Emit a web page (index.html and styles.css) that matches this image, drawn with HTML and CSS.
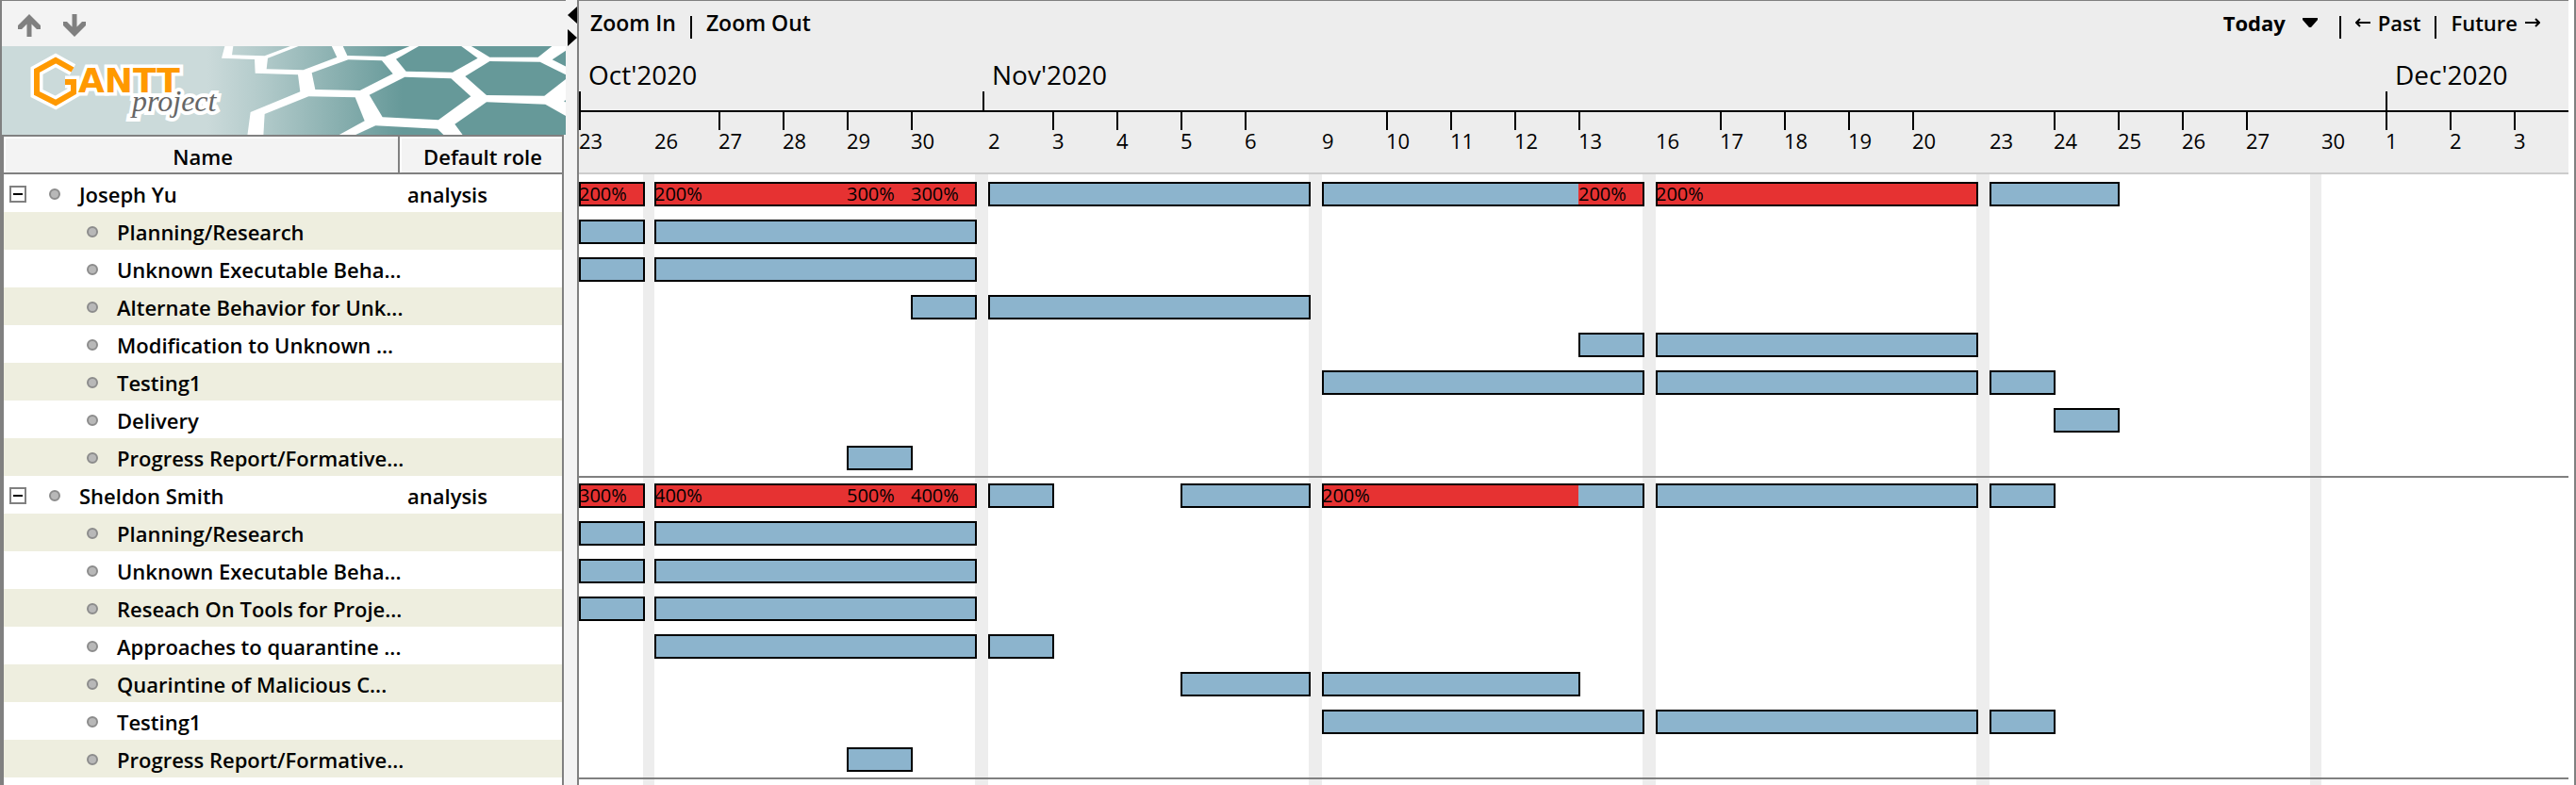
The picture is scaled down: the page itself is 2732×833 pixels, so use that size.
FILE: index.html
```html
<!DOCTYPE html>
<html lang="en">
<head>
<meta charset="utf-8">
<title>GanttProject - Resources Chart</title>
<link rel="stylesheet" href="styles.css">
</head>
<body>
<div class="app">
  <aside class="panel">
    <div class="panel-tools">
      <button type="button" class="tool" aria-label="Move up">
        <svg width="26" height="26" viewBox="0 0 26 26"><path d="M13 1 L25 13 V17 L21 17 L15.500 11.500 V25 H10.500 V11.500 L5 17 L1 17 V13 Z" fill="#808080"/></svg>
      </button>
      <button type="button" class="tool" aria-label="Move down">
        <svg width="26" height="26" viewBox="0 0 26 26"><path d="M13 25 L25 13 V9 L21 9 L15.500 14.500 V1 H10.500 V14.500 L5 9 L1 9 V13 Z" fill="#808080"/></svg>
      </button>
    </div>
    <svg class="banner" viewBox="0 0 598 94" preserveAspectRatio="xMinYMin slice" role="img" aria-label="GanttProject">
      <defs>
        <linearGradient id="sea" gradientUnits="userSpaceOnUse" x1="-60" y1="0" x2="560" y2="0">
          <stop offset="0" stop-color="#cbdada"/>
          <stop offset="0.25" stop-color="#b5cccc"/>
          <stop offset="1" stop-color="#669999"/>
        </linearGradient>
      </defs>
      <g transform="translate(238 -9) scale(0.33333)">
        <rect x="-720" y="20" width="1820" height="300" fill="url(#sea)"/>
        <path fill="#fff" d="M-3 20 L-15 65 L90 69 L92 113 L228 118 L235 172 L77 237 L67 312 H1090 V20 Z"/>
        <g fill="url(#sea)">
          <path d="M23 20 L18 55 L122 58 L222 20 Z"/>
          <path d="M132 65 L248 20 H332 L352 62 L245 103 L128 100 Z"/>
          <path d="M272 112 L388 70 L495 73 L530 115 L425 168 L283 165 Z"/>
          <path d="M368 20 H600 L505 60 L385 57 Z"/>
          <path d="M540 68 L625 20 H738 L800 65 L720 110 L572 107 Z"/>
          <path d="M455 182 L568 125 L715 130 L778 187 L675 262 L497 253 Z"/>
          <path d="M768 20 H1045 L992 62 L838 62 Z"/>
          <path d="M760 123 L838 75 L998 77 L1085 120 V128 L1012 185 L828 183 Z"/>
          <path d="M1037 70 L1085 38 V94 Z"/>
          <path d="M727 275 L828 205 L1015 212 L1085 252 V312 H754 Z"/>
          <path d="M122 243 L262 187 L410 190 L440 265 L354 312 H118 Z"/>
          <path d="M405 312 L475 280 L672 290 L694 312 Z"/>
          <path d="M1074 202 L1085 196 V208 Z"/>
        </g>
      </g>
      <g fill="none" stroke-linejoin="miter">
        <path d="M75 25 L57 15 L37 26 V50 L57 60 L76 49 V38 H67" stroke="#fff" stroke-width="13"/>
        <text class="logo-name" x="81" y="49">ANTT</text>
        <path d="M75 25 L57 15 L37 26 V50 L57 60 L76 49 V38 H67" stroke="#ff9900" stroke-width="6"/>
        <text class="logo-sub" x="138" y="69">project</text>
      </g>
    </svg>
    <table class="people">
      <colgroup><col class="col-name"><col class="col-role"></colgroup>
      <thead><tr><th scope="col">Name</th><th scope="col">Default role</th></tr></thead>
      <tbody>
        <tr><td><div class="person"><button type="button" class="fold" aria-label="Collapse Joseph Yu"></button><i class="dot"></i>Joseph Yu</div></td><td>analysis</td></tr>
        <tr><td><div class="task"><i class="dot"></i>Planning/Research</div></td><td></td></tr>
        <tr><td><div class="task"><i class="dot"></i>Unknown Executable Beha...</div></td><td></td></tr>
        <tr><td><div class="task"><i class="dot"></i>Alternate Behavior for Unk...</div></td><td></td></tr>
        <tr><td><div class="task"><i class="dot"></i>Modification to Unknown ...</div></td><td></td></tr>
        <tr><td><div class="task"><i class="dot"></i>Testing1</div></td><td></td></tr>
        <tr><td><div class="task"><i class="dot"></i>Delivery</div></td><td></td></tr>
        <tr><td><div class="task"><i class="dot"></i>Progress Report/Formative...</div></td><td></td></tr>
        <tr><td><div class="person"><button type="button" class="fold" aria-label="Collapse Sheldon Smith"></button><i class="dot"></i>Sheldon Smith</div></td><td>analysis</td></tr>
        <tr><td><div class="task"><i class="dot"></i>Planning/Research</div></td><td></td></tr>
        <tr><td><div class="task"><i class="dot"></i>Unknown Executable Beha...</div></td><td></td></tr>
        <tr><td><div class="task"><i class="dot"></i>Reseach On Tools for Proje...</div></td><td></td></tr>
        <tr><td><div class="task"><i class="dot"></i>Approaches to quarantine ...</div></td><td></td></tr>
        <tr><td><div class="task"><i class="dot"></i>Quarintine of Malicious C...</div></td><td></td></tr>
        <tr><td><div class="task"><i class="dot"></i>Testing1</div></td><td></td></tr>
        <tr><td><div class="task"><i class="dot"></i>Progress Report/Formative...</div></td><td></td></tr>
      </tbody>
    </table>
    <div class="panel-rest"></div>
  </aside>

  <div class="splitter">
    <button type="button" aria-label="Hide table"><svg width="10" height="18" viewBox="0 0 10 18"><path d="M10 0 V18 L0 9 Z"/></svg></button>
    <button type="button" aria-label="Hide chart"><svg width="10" height="18" viewBox="0 0 10 18"><path d="M0 0 V18 L10 9 Z"/></svg></button>
  </div>

  <main class="chart">
    <header class="chart-head">
      <nav class="chart-tools">
        <button type="button">Zoom In</button><i class="bar-sep"></i><button type="button">Zoom Out</button>
        <span class="spring"></span>
        <button type="button" class="today">Today <svg width="16" height="10" viewBox="0 0 16 10"><path d="M0 0 H16 V2 L9 10 H7 L0 2 Z"/></svg></button><i class="bar-sep"></i><button type="button" class="step"><svg width="16" height="10" viewBox="0 0 16 10"><path d="M16 5 H2 M5 1 L1 5 L5 9" fill="none" stroke="#000" stroke-width="2"/></svg>Past</button><i class="bar-sep"></i><button type="button" class="step">Future<svg width="16" height="10" viewBox="0 0 16 10"><path d="M0 5 H14 M11 1 L15 5 L11 9" fill="none" stroke="#000" stroke-width="2"/></svg></button>
      </nav>
      <div class="calendar months">
        <div class="month" style="grid-column:1/8">Oct'2020</div>
        <div class="month midgap" style="grid-column:8/34">Nov'2020</div>
        <div class="month" style="grid-column:34/37">Dec'2020</div>
      </div>
      <div class="calendar days">
        <span class="day tick" style="grid-column:1">23</span>
        <span class="day" style="grid-column:3">26</span>
        <span class="day tick" style="grid-column:4">27</span>
        <span class="day tick" style="grid-column:5">28</span>
        <span class="day tick" style="grid-column:6">29</span>
        <span class="day tick" style="grid-column:7">30</span>
        <span class="day" style="grid-column:9">2</span>
        <span class="day tick" style="grid-column:10">3</span>
        <span class="day tick" style="grid-column:11">4</span>
        <span class="day tick" style="grid-column:12">5</span>
        <span class="day tick" style="grid-column:13">6</span>
        <span class="day" style="grid-column:15">9</span>
        <span class="day tick" style="grid-column:16">10</span>
        <span class="day tick" style="grid-column:17">11</span>
        <span class="day tick" style="grid-column:18">12</span>
        <span class="day tick" style="grid-column:19">13</span>
        <span class="day" style="grid-column:21">16</span>
        <span class="day tick" style="grid-column:22">17</span>
        <span class="day tick" style="grid-column:23">18</span>
        <span class="day tick" style="grid-column:24">19</span>
        <span class="day tick" style="grid-column:25">20</span>
        <span class="day" style="grid-column:27">23</span>
        <span class="day tick" style="grid-column:28">24</span>
        <span class="day tick" style="grid-column:29">25</span>
        <span class="day tick" style="grid-column:30">26</span>
        <span class="day tick" style="grid-column:31">27</span>
        <span class="day" style="grid-column:33">30</span>
        <span class="day tick" style="grid-column:34">1</span>
        <span class="day tick" style="grid-column:35">2</span>
        <span class="day tick" style="grid-column:36">3</span>
      </div>
    </header>

    <div class="chart-body">
      <div class="calendar weekends">
        <i style="grid-column:2"></i><i style="grid-column:8"></i><i style="grid-column:14"></i><i style="grid-column:20"></i><i style="grid-column:26"></i><i style="grid-column:32"></i>
      </div>
      <div class="lanes">
        <div class="calendar lane">
          <b class="bar over" style="grid-column:1/2"></b><span class="load" style="grid-column:1">200%</span>
          <b class="bar over" style="grid-column:3/8"></b><span class="load" style="grid-column:3">200%</span><span class="load" style="grid-column:6">300%</span><span class="load" style="grid-column:7">300%</span>
          <b class="bar" style="grid-column:9/14"></b>
          <b class="bar" style="grid-column:15/20"></b><b class="fill" style="grid-column:19/20"></b><span class="load" style="grid-column:19">200%</span>
          <b class="bar over" style="grid-column:21/26"></b><span class="load" style="grid-column:21">200%</span>
          <b class="bar" style="grid-column:27/29"></b>
        </div>
        <div class="calendar lane"><b class="bar" style="grid-column:1/2"></b><b class="bar" style="grid-column:3/8"></b></div>
        <div class="calendar lane"><b class="bar" style="grid-column:1/2"></b><b class="bar" style="grid-column:3/8"></b></div>
        <div class="calendar lane"><b class="bar" style="grid-column:7/8"></b><b class="bar" style="grid-column:9/14"></b></div>
        <div class="calendar lane"><b class="bar" style="grid-column:19/20"></b><b class="bar" style="grid-column:21/26"></b></div>
        <div class="calendar lane"><b class="bar" style="grid-column:15/20"></b><b class="bar" style="grid-column:21/26"></b><b class="bar" style="grid-column:27/28"></b></div>
        <div class="calendar lane"><b class="bar" style="grid-column:28/29"></b></div>
        <div class="calendar lane"><b class="bar" style="grid-column:6/7"></b></div>
        <div class="calendar lane first">
          <b class="bar over" style="grid-column:1/2"></b><span class="load" style="grid-column:1">300%</span>
          <b class="bar over" style="grid-column:3/8"></b><span class="load" style="grid-column:3">400%</span><span class="load" style="grid-column:6">500%</span><span class="load" style="grid-column:7">400%</span>
          <b class="bar" style="grid-column:9/10"></b>
          <b class="bar" style="grid-column:12/14"></b>
          <b class="bar" style="grid-column:15/20"></b><b class="fill lead" style="grid-column:15/19"></b><span class="load" style="grid-column:15">200%</span>
          <b class="bar" style="grid-column:21/26"></b>
          <b class="bar" style="grid-column:27/28"></b>
        </div>
        <div class="calendar lane"><b class="bar" style="grid-column:1/2"></b><b class="bar" style="grid-column:3/8"></b></div>
        <div class="calendar lane"><b class="bar" style="grid-column:1/2"></b><b class="bar" style="grid-column:3/8"></b></div>
        <div class="calendar lane"><b class="bar" style="grid-column:1/2"></b><b class="bar" style="grid-column:3/8"></b></div>
        <div class="calendar lane"><b class="bar" style="grid-column:3/8"></b><b class="bar" style="grid-column:9/10"></b></div>
        <div class="calendar lane"><b class="bar" style="grid-column:12/14"></b><b class="bar" style="grid-column:15/19"></b></div>
        <div class="calendar lane"><b class="bar" style="grid-column:15/20"></b><b class="bar" style="grid-column:21/26"></b><b class="bar" style="grid-column:27/28"></b></div>
        <div class="calendar lane"><b class="bar" style="grid-column:6/7"></b></div>
        <div class="lanes-end"></div>
      </div>
    </div>
  </main>
</div>
</body>
</html>
```

FILE: styles.css
```css
* { box-sizing: border-box; }

body {
  margin: 0;
  background: #fff;
  color: #000;
  font: 22px "Open Sans", "Noto Sans", sans-serif;
}

button {
  margin: 0;
  padding: 0;
  border: 0;
  background: none;
  color: inherit;
  font: inherit;
  display: flex;
  align-items: center;
}

svg { display: block; }

.app {
  display: flex;
  min-height: 100vh;
  border-right: 2px solid #808080;
}

/* Resource table */
.panel {
  flex: 0 0 602px;
  display: flex;
  flex-direction: column;
  padding-right: 2px;
  background: #f3f3f3;
  border-left: 2px solid #808080;
}

.panel-tools {
  display: flex;
  gap: 22px;
  height: 49px;
  padding: 4px 16px 0;
  border-top: 1px solid #808080;
}

.banner { width: 100%; height: 94px; }

.logo-name {
  font: bold 36px "DejaVu Sans", sans-serif;
  fill: #ff9900;
  stroke: #fff;
  stroke-width: 7px;
  paint-order: stroke;
}

.logo-sub {
  font: italic 32px "Liberation Serif", serif;
  fill: #666;
  stroke: #fff;
  stroke-width: 8px;
  paint-order: stroke;
}

.people {
  width: 596px;
  border-collapse: separate;
  border-spacing: 0;
  table-layout: fixed;
  border: solid #808080;
  border-width: 2px 2px 0;
  font-weight: 600;
  background: #fff;
}

.col-name { width: 420px; }

.people th {
  height: 40px;
  padding: 4px 0 0 4px;
  background: #f3f3f3;
  border: solid #808080;
  border-width: 0 2px 2px 0;
  box-shadow: inset 2px 2px #fff;
  font-weight: 600;
  line-height: 32px;
}

.people th:last-child { border-right: 0; }

.people td {
  height: 40px;
  padding: 2px 0 0;
  line-height: 32px;
  white-space: nowrap;
}

.people td:last-child { padding-left: 8px; }
.people tbody tr:nth-child(even) { background: #eeeedf; }

.person, .task { display: flex; align-items: center; }
.person { padding-left: 6px; }
.task { padding-left: 88px; }

.fold {
  flex: none;
  width: 18px;
  height: 18px;
  margin-right: 24px;
  justify-content: center;
  border: 2px solid #808080;
}

.fold::before {
  content: "";
  width: 10px;
  height: 2px;
  background: #000;
}

.dot {
  flex: none;
  width: 12px;
  height: 12px;
  margin-right: 20px;
  border-radius: 50%;
  border: 2px solid #8c8c8c;
  background: #b8b8b8;
}

.panel-rest {
  flex: 1;
  width: 596px;
  background: #fff;
  border: solid #808080;
  border-width: 0 2px;
}

/* Divider with the two collapse arrows */
.splitter {
  flex: 0 0 10px;
  display: flex;
  flex-direction: column;
  gap: 6px;
  padding-top: 7px;
  background: #f3f3f3;
}

/* Chart */
.chart {
  flex: 1;
  min-width: 0;
  display: flex;
  flex-direction: column;
  border-left: 2px solid #808080;
  padding-right: 6px;
}

/* Working days are wide columns, weekends are folded into narrow ones */
.calendar {
  display: grid;
  grid-template-columns:
    minmax(0, 68fr) minmax(0, 12fr)
    repeat(5, minmax(0, 68fr)) minmax(0, 14fr)
    repeat(5, minmax(0, 68fr)) minmax(0, 14fr)
    repeat(5, minmax(0, 68fr)) minmax(0, 14fr)
    repeat(5, minmax(0, 68fr)) minmax(0, 14fr)
    repeat(5, minmax(0, 68fr)) minmax(0, 12fr)
    repeat(3, minmax(0, 68fr)) minmax(0, 58fr);
}

.chart-head {
  height: 185px;
  background: #ededed;
  border-top: 1px solid #808080;
  border-bottom: 2px solid #ccc;
}

.chart-tools {
  display: flex;
  align-items: center;
  gap: 15px;
  height: 48px;
  padding: 0 30px 2px 12px;
  font-size: 23px;
  font-weight: 600;
}

.bar-sep { width: 2px; height: 24px; margin-top: 10px; background: #000; }
.spring { flex: 1; }
.today { gap: 18px; padding-right: 8px; font-size: 22px; font-weight: 700; }
.step { gap: 8px; font-size: 22px; }

.months { height: 70px; border-bottom: 2px solid #000; }

.month {
  display: flex;
  flex-direction: column;
  justify-content: space-between;
  padding-top: 16px;
  font-size: 28px;
  line-height: 28px;
  text-indent: 10px;
}

.month::after {
  content: "";
  width: 2px;
  height: 20px;
  background: #000;
}

.midgap { padding-left: 8px; }

.day {
  font-size: 22px;
  line-height: 22px;
  text-indent: 2px;
}

.day::before {
  content: "";
  display: block;
  width: 2px;
  height: 19px;
}

.tick::before { background: #000; }

.chart-body { flex: 1; display: grid; }
.weekends, .lanes { grid-area: 1 / 1; }
.weekends i { background: #ededed; }
.lanes { display: flex; flex-direction: column; }
.lane { height: 40px; padding-top: 8px; }
.first, .lanes-end { box-shadow: inset 0 2px #808080; }
.lanes-end { flex: 1; }

.bar, .fill, .load { grid-row: 1; }

.bar {
  height: 26px;
  margin-right: -2px;
  background: #8cb4cd;
  border: 2px solid #000;
}

.over, .fill { background: #e63232; }
.fill { height: 22px; margin-top: 2px; }
.lead { margin-left: 2px; }

.load {
  font-size: 20px;
  line-height: 26px;
}
```
